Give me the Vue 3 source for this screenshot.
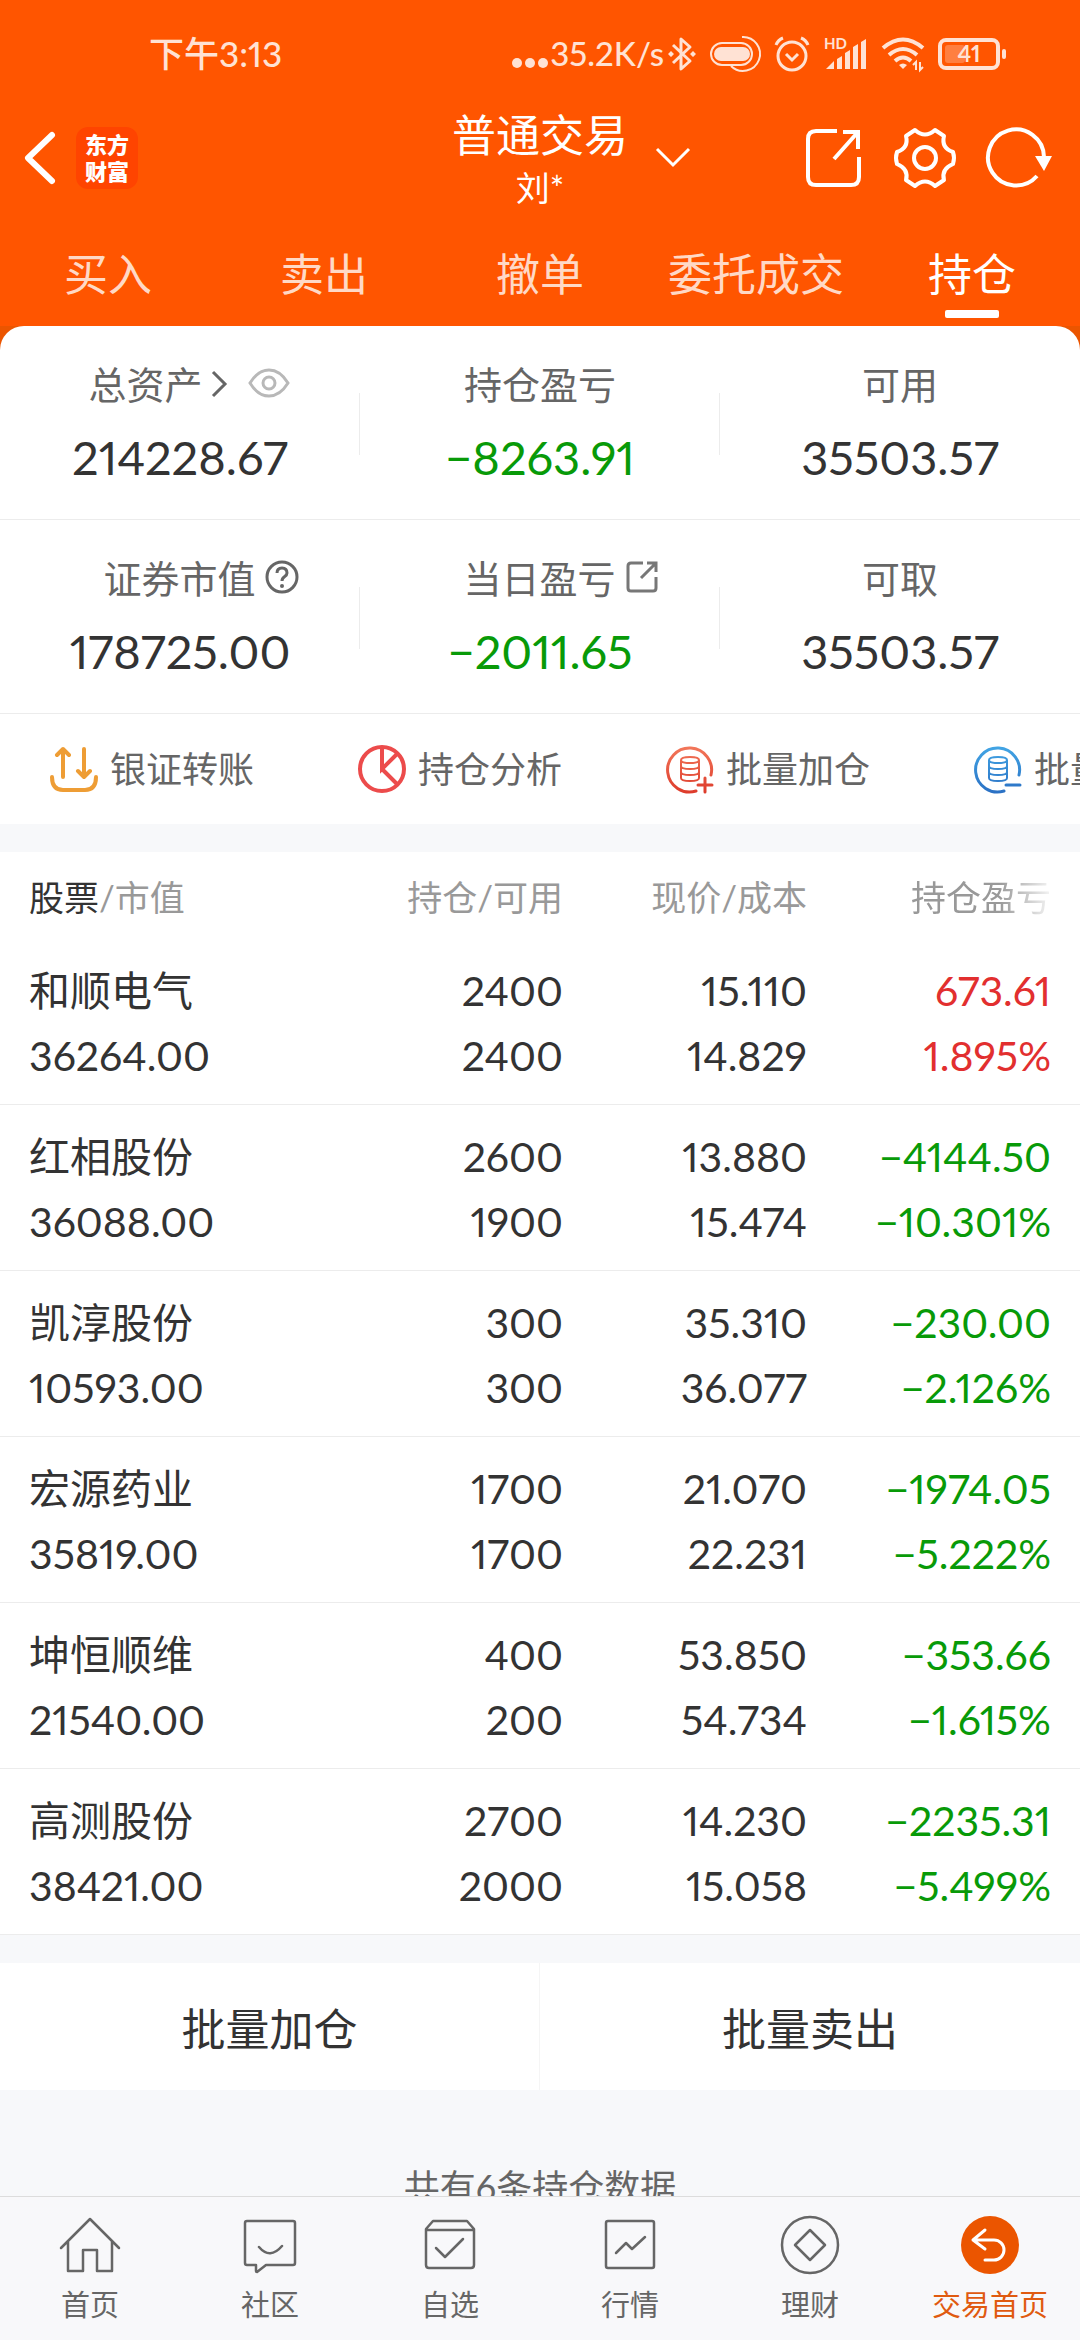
<script setup>
import {ref} from "vue";

const tabs = ["买入", "卖出", "撤单", "委托成交", "持仓"];
const activeTab = ref("持仓");

const summary = [
  [
    {label: "总资产", value: "214228.67", icon: "eye"},
    {label: "持仓盈亏", value: "−8263.91", tone: "down"},
    {label: "可用", value: "35503.57"},
  ],
  [
    {label: "证券市值", value: "178725.00", icon: "help"},
    {label: "当日盈亏", value: "−2011.65", tone: "down", icon: "share"},
    {label: "可取", value: "35503.57"},
  ],
];

const actions = [
  {label: "银证转账", icon: "transfer"},
  {label: "持仓分析", icon: "pie"},
  {label: "批量加仓", icon: "add"},
  {label: "批量卖出", icon: "sub"},
];

const holdings = [
  {name: "和顺电气", value: "36264.00", amount: 2400, usable: 2400, price: "15.110", cost: "14.829", profit: "673.61", rate: "1.895%", tone: "up"},
  {name: "红相股份", value: "36088.00", amount: 2600, usable: 1900, price: "13.880", cost: "15.474", profit: "−4144.50", rate: "−10.301%", tone: "down"},
  {name: "凯淳股份", value: "10593.00", amount: 300, usable: 300, price: "35.310", cost: "36.077", profit: "−230.00", rate: "−2.126%", tone: "down"},
  {name: "宏源药业", value: "35819.00", amount: 1700, usable: 1700, price: "21.070", cost: "22.231", profit: "−1974.05", rate: "−5.222%", tone: "down"},
  {name: "坤恒顺维", value: "21540.00", amount: 400, usable: 200, price: "53.850", cost: "54.734", profit: "−353.66", rate: "−1.615%", tone: "down"},
  {name: "高测股份", value: "38421.00", amount: 2700, usable: 2000, price: "14.230", cost: "15.058", profit: "−2235.31", rate: "−5.499%", tone: "down"},
];

const navItems = [
  {label: "首页", path: "M1 33 30 4 59 33M8 27V56H23V35H37V56H52V27"},
  {label: "社区", path: "M7 6H53Q55 6 55 8V48Q55 50 53 50H26L17 57Q16 57 16 56V50H7Q5 50 5 48V8Q5 6 7 6ZM19 32Q30 45 42 31"},
  {label: "自选", path: "M6 14 13 6H47L54 14V50Q54 53 51 53H9Q6 53 6 50ZM6 15H54M16 33 25 42 43 24"},
  {label: "行情", path: "M8 6H52Q54 6 54 8V51Q54 53 52 53H8Q6 53 6 51V8Q6 6 8 6ZM16 38 26 28 32 34 45 22"},
  {label: "理财", path: "M30 2A28 28 0 1 1 30 58A28 28 0 1 1 30 2ZM30 15 45 30 30 45 15 30Z"},
  {label: "交易首页", path: "M25 15 13 25 25 34M13 25H34A10 10 0 0 1 34 45H25", active: true},
];
</script>

<template>
  <div class="screen">
    <header class="top">
      <div class="status">
        <span class="clock">下午3:13</span>
        <div class="status-icons">
          <div class="net">
            <svg width="34" height="34" viewBox="0 0 34 34" fill="currentColor">
              <circle cx="5" cy="26" r="5"/><circle cx="18" cy="26" r="5"/><circle cx="31" cy="26" r="5"/>
            </svg>
            <span>35.2K/s</span>
            <svg width="28" height="36" viewBox="0 0 28 36" fill="none" stroke="currentColor" stroke-width="3">
              <path d="M5 9 22 25 13 33V3L22 11 5 27" stroke-linejoin="round"/>
              <path d="M3 15 6 18 3 21 0 18ZM25 15 28 18 25 21 22 18Z" fill="currentColor" stroke="none"/>
            </svg>
          </div>
          <svg width="50" height="36" viewBox="0 0 50 36" fill="none" stroke="currentColor">
            <rect x="1" y="7" width="41" height="22" rx="11" stroke-width="2"/>
            <rect x="4" y="11" width="36" height="14" rx="7" fill="currentColor" stroke="none"/>
            <path d="M32 1A17 17 0 1 1 21 30" stroke-width="2"/>
          </svg>
          <svg width="36" height="36" viewBox="0 0 36 36" fill="none" stroke="currentColor" stroke-width="3">
            <circle cx="18" cy="20" r="14"/>
            <path d="M12 18 18 24 24 18M2 9Q4 4 9 2M34 9Q32 4 27 2"/>
          </svg>
          <svg width="44" height="36" viewBox="0 0 44 36" fill="currentColor">
            <text class="hd" x="0" y="13">HD</text>
            <path d="M2 33 10 25V33ZM13 33V23L18 20V33ZM21 33V17L26 14V33ZM29 33V11L34 8V33ZM37 33V6L42 3V33Z"/>
          </svg>
          <svg width="42" height="36" viewBox="0 0 42 36" fill="none" stroke="currentColor" stroke-width="4">
            <path d="M1 12Q21 -5 41 12M7 19Q21 7 35 19M13 25Q21 18 29 25"/>
            <path d="M17 29Q21 26 25 29L21 33Z" fill="currentColor" stroke="none"/>
            <path d="M34 34V26L31 29M38 26V34L41 31" stroke-width="2"/>
          </svg>
          <svg width="69" height="36" viewBox="0 0 69 36" fill="none">
            <rect x="2" y="4" width="58" height="28" rx="6" stroke="currentColor" stroke-width="4"/>
            <rect x="7" y="9" width="20" height="18" rx="3" fill="#fff" opacity=".25"/>
            <rect x="64" y="13" width="4" height="10" rx="2" fill="currentColor"/>
            <text class="battery" x="31" y="26" text-anchor="middle" fill="currentColor">41</text>
          </svg>
        </div>
      </div>

      <div class="bar">
        <div class="bar-left">
          <button type="button" aria-label="返回">
            <svg width="34" height="54" viewBox="0 0 34 54" fill="none" stroke="#fff" stroke-width="6" stroke-linecap="round" stroke-linejoin="round">
              <path d="M30 4 6 27 30 50"/>
            </svg>
          </button>
          <span class="logo">东方<br>财富</span>
        </div>
        <div class="title">
          <h1>普通交易</h1>
          <p>刘*</p>
        </div>
        <div class="bar-right">
          <button type="button" aria-label="切换账户">
            <svg width="34" height="20" viewBox="0 0 34 20" fill="none" stroke="#fff" stroke-width="3">
              <path d="M1 1 17 17 33 1"/>
            </svg>
          </button>
          <div class="bar-actions">
            <button type="button" aria-label="分享">
              <svg width="56" height="60" viewBox="0 0 56 60" fill="none" stroke="#fff" stroke-width="4">
                <path d="M31 3H10Q2 3 2 11V49Q2 57 10 57H45Q53 57 53 49V29"/>
                <path d="M37 4H52V21M52 4 28 31"/>
              </svg>
            </button>
            <button type="button" aria-label="设置">
              <svg width="62" height="60" viewBox="0 0 62 60" fill="none" stroke="#fff" stroke-width="4" stroke-linejoin="round">
                <path d="M21 2Q31 11 41 2L50 8Q47 20 59 24Q61 30 59 36Q47 41 50 52L41 58Q31 49 21 58L12 52Q15 41 3 36Q1 30 3 24Q15 20 12 8Z"/>
                <circle cx="31" cy="30" r="11"/>
              </svg>
            </button>
            <button type="button" aria-label="刷新">
              <svg width="64" height="60" viewBox="0 0 64 60" fill="none" stroke="#fff" stroke-width="4">
                <path d="M56 29A28 28 0 1 0 49 48"/>
                <path d="M47 28H64L56 43Z" fill="#fff" stroke="none"/>
              </svg>
            </button>
          </div>
        </div>
      </div>

      <nav class="tabs">
        <button
          v-for="tab in tabs"
          :key="tab"
          type="button"
          :class="{ active: tab === activeTab }"
          @click="activeTab = tab"
        >{{ tab }}</button>
      </nav>
    </header>

    <main class="content">
      <div class="panel-wrap">
        <section class="panel">
          <div v-for="(row, i) in summary" :key="i" class="summary-row">
            <div v-for="item in row" :key="item.label" class="summary-cell">
              <div class="label" :class="item.icon">
                <span>{{ item.label }}</span>
                <template v-if="item.icon === 'eye'">
                  <svg class="arrow" width="15" height="28" viewBox="0 0 15 28" fill="none" stroke="#666" stroke-width="3">
                    <path d="M1 2 13 14 1 26"/>
                  </svg>
                  <button type="button" aria-label="隐藏金额">
                    <svg width="42" height="30" viewBox="0 0 42 30" fill="none" stroke="#b8b8b8" stroke-width="3">
                      <path d="M2 15Q10 2 21 2T40 15Q32 28 21 28T2 15Z"/>
                      <circle cx="21" cy="15" r="6"/>
                    </svg>
                  </button>
                </template>
                <button v-else-if="item.icon === 'help'" type="button" aria-label="说明">
                  <svg width="34" height="34" viewBox="0 0 34 34" fill="none" stroke="#666" stroke-width="3">
                    <circle cx="17" cy="17" r="15"/>
                    <path d="M12 13Q12 8 17 8T22 13C22 17 17 16 17 21"/>
                    <circle cx="17" cy="26" r="2" fill="#666" stroke="none"/>
                  </svg>
                </button>
                <button v-else-if="item.icon === 'share'" type="button" aria-label="分享当日盈亏">
                  <svg width="34" height="34" viewBox="0 0 34 34" fill="none" stroke="#777" stroke-width="3">
                    <path d="M18 3H6Q3 3 3 6V28Q3 31 6 31H28Q31 31 31 28V17M22 3H31V12M31 3 16 18"/>
                  </svg>
                </button>
              </div>
              <div class="value" :class="item.tone">{{ item.value }}</div>
            </div>
          </div>

          <div class="actions">
            <button v-for="action in actions" :key="action.label" type="button">
              <svg v-if="action.icon === 'transfer'" width="48" height="48" viewBox="0 0 48 48" fill="none" stroke="#ee9d35" stroke-width="4" stroke-linecap="round" stroke-linejoin="round">
                <path d="M2 32Q2 45 13 45H35Q46 45 46 32M13 32V4M7 10 13 4 19 10M34 4V31M28 26 34 32 40 26"/>
              </svg>
              <svg v-else-if="action.icon === 'pie'" width="48" height="48" viewBox="0 0 48 48" fill="none" stroke="#ec4b4b" stroke-width="4">
                <circle cx="24" cy="24" r="22"/>
                <path d="M24 2V24L39 9M24 24 39 39"/>
              </svg>
              <svg v-else width="48" height="48" viewBox="0 0 48 48" fill="none" :stroke="`url(#${action.icon})`" stroke-width="3" stroke-linecap="round">
                <defs>
                  <linearGradient :id="action.icon" gradientUnits="userSpaceOnUse" x1="0" y1="0" x2="0" y2="48">
                    <stop offset="0" :stop-color="action.icon === 'add' ? '#f3795c' : '#43a7e6'"/>
                    <stop offset="1" :stop-color="action.icon === 'add' ? '#dd3b2b' : '#2a70c4'"/>
                  </linearGradient>
                </defs>
                <path d="M45 30A22 22 0 1 0 30 46"/>
                <path d="M15 15Q15 12 24 12T33 15V33Q33 36 24 36T15 33ZM15 15Q15 18 24 18T33 15M15 21Q15 24 24 24T33 21M15 27Q15 30 24 30T33 27" stroke-width="2"/>
                <path v-if="action.icon === 'add'" d="M32 40H46M39 33V47"/>
                <path v-else d="M32 40H46"/>
              </svg>
              <span>{{ action.label }}</span>
            </button>
          </div>
        </section>
      </div>

      <table class="holdings">
        <thead>
          <tr>
            <th scope="col"><b>股票</b>/市值</th>
            <th scope="col">持仓/可用</th>
            <th scope="col">现价/成本</th>
            <th scope="col"><span class="fade">持仓盈亏</span></th>
          </tr>
        </thead>
        <tbody>
          <tr v-for="stock in holdings" :key="stock.name">
            <td><span>{{ stock.name }}</span><span>{{ stock.value }}</span></td>
            <td><span>{{ stock.amount }}</span><span>{{ stock.usable }}</span></td>
            <td><span>{{ stock.price }}</span><span>{{ stock.cost }}</span></td>
            <td :class="stock.tone"><span>{{ stock.profit }}</span><span>{{ stock.rate }}</span></td>
          </tr>
        </tbody>
      </table>

      <div class="batch">
        <button type="button">批量加仓</button>
        <button type="button">批量卖出</button>
      </div>

      <p class="total">共有{{ holdings.length }}条持仓数据</p>
    </main>

    <nav class="bottom-nav">
      <a v-for="item in navItems" :key="item.label" href="#" :class="{ active: item.active }">
        <svg width="60" height="60" viewBox="0 0 60 60" fill="none" stroke="currentColor" stroke-width="2.5" stroke-linecap="round" stroke-linejoin="round">
          <circle v-if="item.active" cx="30" cy="30" r="29" fill="#eb5500" stroke="none"/>
          <path :d="item.path"/>
        </svg>
        <span>{{ item.label }}</span>
      </a>
    </nav>
  </div>
</template>

<style>
body {
  background: #f7f8fa;
}
</style>

<style scoped>
.screen {
  display: flex;
  flex-direction: column;
  height: 100vh;
  font-family: Lato, "Noto Sans CJK SC", sans-serif;
  font-variant-numeric: proportional-nums;
  color: #333;
}

h1,
p {
  margin: 0;
  font-weight: 400;
}

button {
  display: flex;
  align-items: center;
  justify-content: center;
  padding: 0;
  border: none;
  background: none;
  font: inherit;
  font-variant-numeric: inherit;
  color: inherit;
  cursor: pointer;
}

svg {
  display: block;
  flex: none;
  overflow: visible;
}

.top {
  background: #ff5500;
  color: #fff;
}

.status {
  display: flex;
  align-items: center;
  justify-content: space-between;
  height: 102px;
  padding: 3px 73px 0 149px;
  font-size: 33px;
  font-weight: 500;
  line-height: 40px;
  color: #ffe2d4;
}

.clock {
  font-size: 35px;
}

.clock,
.net span {
  padding-bottom: 3px;
}

.status-icons {
  display: flex;
  align-items: center;
  gap: 14px;
}

.net {
  display: flex;
  align-items: center;
  gap: 4px;
}

.hd {
  font-size: 15px;
  font-weight: 700;
}

.battery {
  font-size: 23px;
  font-weight: 700;
}

.bar {
  display: grid;
  grid-template-columns: 1fr auto 1fr;
  align-items: center;
}

.bar-left {
  display: flex;
  align-items: center;
  gap: 20px;
  padding-left: 22px;
}

.logo {
  display: flex;
  align-items: center;
  justify-content: center;
  width: 62px;
  height: 62px;
  border-radius: 12px;
  background: #ff4400;
  font-size: 22px;
  font-weight: 900;
  line-height: 27px;
}

.title {
  text-align: center;
}

.title h1 {
  font-size: 44px;
  line-height: 60px;
}

.title p {
  font-size: 34px;
  line-height: 46px;
}

.bar-right {
  display: flex;
  align-items: center;
  justify-content: space-between;
  padding: 0 28px;
}

.bar-actions {
  display: flex;
  gap: 32px;
}

.tabs {
  display: grid;
  grid-template-columns: repeat(5, 1fr);
  padding: 33px 0 8px;
}

.tabs button {
  flex-direction: column;
  font-size: 44px;
  line-height: 60px;
  color: #ffd9c6;
}

.tabs button::after {
  content: "";
  width: 54px;
  height: 8px;
  margin-top: 6px;
  border-radius: 2px;
}

.tabs .active {
  color: #fff;
}

.tabs .active::after {
  background: #fff;
}

.content {
  flex: 1;
  min-height: 0;
  overflow-y: auto;
  scrollbar-width: none;
}

.panel-wrap {
  background: linear-gradient(#eb5500 40px, #fff 40px);
}

.panel {
  border-radius: 24px 24px 0 0;
  background: #fff;
}

.summary-row {
  display: grid;
  grid-template-columns: repeat(3, 1fr);
  padding: 28px 0 26px;
  border-bottom: 1px solid #ececec;
}

.summary-cell {
  background: linear-gradient(#ececec, #ececec) right 50% / 1px 62px no-repeat;
}

.summary-cell:last-child {
  background: none;
}

.label {
  display: flex;
  align-items: center;
  justify-content: center;
  gap: 9px;
  font-size: 38px;
  line-height: 60px;
  color: #666;
}

.label.eye {
  padding-left: 18px;
}

.label.help,
.label.share {
  padding-left: 42px;
}

.label button {
  padding-bottom: 3px;
}

.arrow {
  margin-right: 12px;
}

.value {
  padding-top: 7px;
  font-size: 47px;
  line-height: 72px;
  text-align: center;
}

.up {
  color: #e22f2f;
}

.down {
  color: #089a08;
}

.actions {
  display: flex;
  gap: 104px;
  padding: 28px 50px;
  overflow: hidden;
}

.actions button {
  flex: none;
  gap: 12px;
  font-size: 36px;
  line-height: 54px;
  color: #666;
}

.holdings {
  width: 100%;
  margin-top: 28px;
  border-collapse: collapse;
  table-layout: fixed;
  background: #fff;
}

.holdings th {
  width: 244px;
  height: 87px;
  padding: 0;
  font-size: 35px;
  font-weight: 400;
  text-align: right;
  color: #999;
}

.holdings th:first-child {
  width: auto;
}

.holdings b {
  font-weight: 400;
  color: #333;
}

.fade {
  mask-image: linear-gradient(to left, rgba(0, 0, 0, .1), #000 52px);
}

.holdings td {
  padding: 19px 0 16px;
  border-bottom: 1px solid #ececec;
  font-size: 41px;
  line-height: 65px;
  text-align: right;
}

.holdings td span {
  display: block;
}

.holdings tr > :first-child {
  padding-left: 29px;
  text-align: left;
}

.holdings tr > :last-child {
  padding-right: 29px;
}

.batch {
  display: grid;
  grid-template-columns: 1fr 1fr;
  margin-top: 28px;
  background: #fff;
}

.batch button {
  height: 127px;
  font-size: 44px;
}

.batch button:first-child {
  border-right: 1px solid #f5f5f5;
}

.total {
  padding: 70px 0 40px;
  font-size: 36px;
  line-height: 54px;
  text-align: center;
  color: #666;
}

.bottom-nav {
  display: grid;
  grid-template-columns: repeat(6, 1fr);
  border-top: 1px solid #dcdcdc;
  background: #f8f8fa;
}

.bottom-nav a {
  display: flex;
  flex-direction: column;
  align-items: center;
  gap: 8px;
  padding: 18px 0 14px;
  font-size: 29px;
  line-height: 43px;
  color: #666;
  text-decoration: none;
}

.bottom-nav .active {
  color: #e05a10;
}

.bottom-nav .active path {
  stroke: #fff;
  stroke-width: 3;
}
</style>
